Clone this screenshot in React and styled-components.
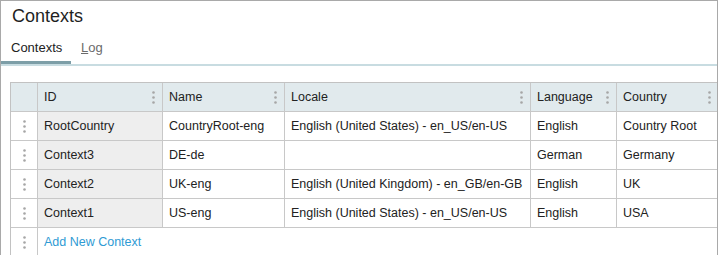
import styled, { createGlobalStyle } from "styled-components";

const GlobalStyle = createGlobalStyle`
  html, body {
    margin: 0;
    padding: 0;
    background: #ffffff;
  }
  body {
    font-family: "Liberation Sans", Arial, sans-serif;
    color: #222;
  }
`;

const Frame = styled.div`
  width: 718px;
  height: 255px;
  box-sizing: border-box;
  border: 1px solid #a9a9a9;
  border-bottom: none;
  overflow: hidden;
  background: #fff;
`;

const Title = styled.h1`
  margin: 0;
  padding: 3px 0 0 11px;
  font-size: 18px;
  font-weight: 400;
  line-height: 24px;
  color: #1f1f1f;
`;

const Tabs = styled.div`
  display: flex;
  margin-top: 10px;
  border-bottom: 2px solid #c8dce1;
`;

const Tab = styled.div`
  padding: 0 10px;
  height: 26px;
  box-sizing: border-box;
  font-size: 13px;
  line-height: 20px;
  color: ${(props) => (props.active ? "#222" : "#6b6b6b")};
  border-bottom: 3px solid ${(props) => (props.active ? "#7d9ea7" : "transparent")};
  width: ${(props) => props.width || "auto"};
`;

const AccessKey = styled.span`
  text-decoration: underline;
`;

const TableWrap = styled.div`
  margin: 16px 0 0 9px;
  border-top: 1px solid #c2c2c2;
  border-left: 1px solid #c2c2c2;
  width: 720px;
`;

const Row = styled.div`
  display: grid;
  grid-template-columns: 27px 125px 122px 246px 86px 102px;
  height: 28px;
  border-bottom: 1px solid #c8c8c8;
  background: ${(props) => (props.header ? "#e1eaed" : "#fff")};
`;

const Cell = styled.div`
  display: flex;
  align-items: center;
  justify-content: space-between;
  padding: 0 7px 0 6px;
  font-size: 12.5px;
  border-right: 1px solid ${(props) => (props.span ? "transparent" : "#c8c8c8")};
  background: ${(props) => (props.shade ? "#eeeeee" : "transparent")};
  white-space: nowrap;
  overflow: hidden;
  grid-column: ${(props) => props.span || "auto"};
`;

const HandleCell = styled.div`
  display: flex;
  align-items: center;
  justify-content: center;
  border-right: 1px solid #c8c8c8;
`;

const Link = styled.a`
  color: #2f9bd4;
  text-decoration: none;
  font-size: 12.5px;
  cursor: pointer;
`;

const Grip = ({ color = "#a6a6a6" }) => (
  <svg width="3" height="13" viewBox="0 0 3 13">
    <circle cx="1.5" cy="1.5" r="1.3" fill={color} />
    <circle cx="1.5" cy="6.5" r="1.3" fill={color} />
    <circle cx="1.5" cy="11.5" r="1.3" fill={color} />
  </svg>
);

const columns = ["ID", "Name", "Locale", "Language", "Country"];

const rows = [
  ["RootCountry", "CountryRoot-eng", "English (United States) - en_US/en-US", "English", "Country Root"],
  ["Context3", "DE-de", "", "German", "Germany"],
  ["Context2", "UK-eng", "English (United Kingdom) - en_GB/en-GB", "English", "UK"],
  ["Context1", "US-eng", "English (United States) - en_US/en-US", "English", "USA"],
];

export default function App() {
  return (
    <>
      <GlobalStyle />
      <Frame>
        <Title>Contexts</Title>
        <Tabs>
          <Tab active width="70px">Contexts</Tab>
          <Tab>
            <AccessKey>L</AccessKey>og
          </Tab>
        </Tabs>
        <TableWrap>
          <Row header>
            <HandleCell />
            {columns.map((c) => (
              <Cell key={c}>
                {c}
                <Grip />
              </Cell>
            ))}
          </Row>
          {rows.map((r) => (
            <Row key={r[0]}>
              <HandleCell>
                <Grip />
              </HandleCell>
              {r.map((v, i) => (
                <Cell key={i} shade={i === 0}>
                  {v}
                </Cell>
              ))}
            </Row>
          ))}
          <Row>
            <HandleCell>
              <Grip />
            </HandleCell>
            <Cell span="2 / 7">
              <Link>Add New Context</Link>
            </Cell>
          </Row>
        </TableWrap>
      </Frame>
    </>
  );
}
